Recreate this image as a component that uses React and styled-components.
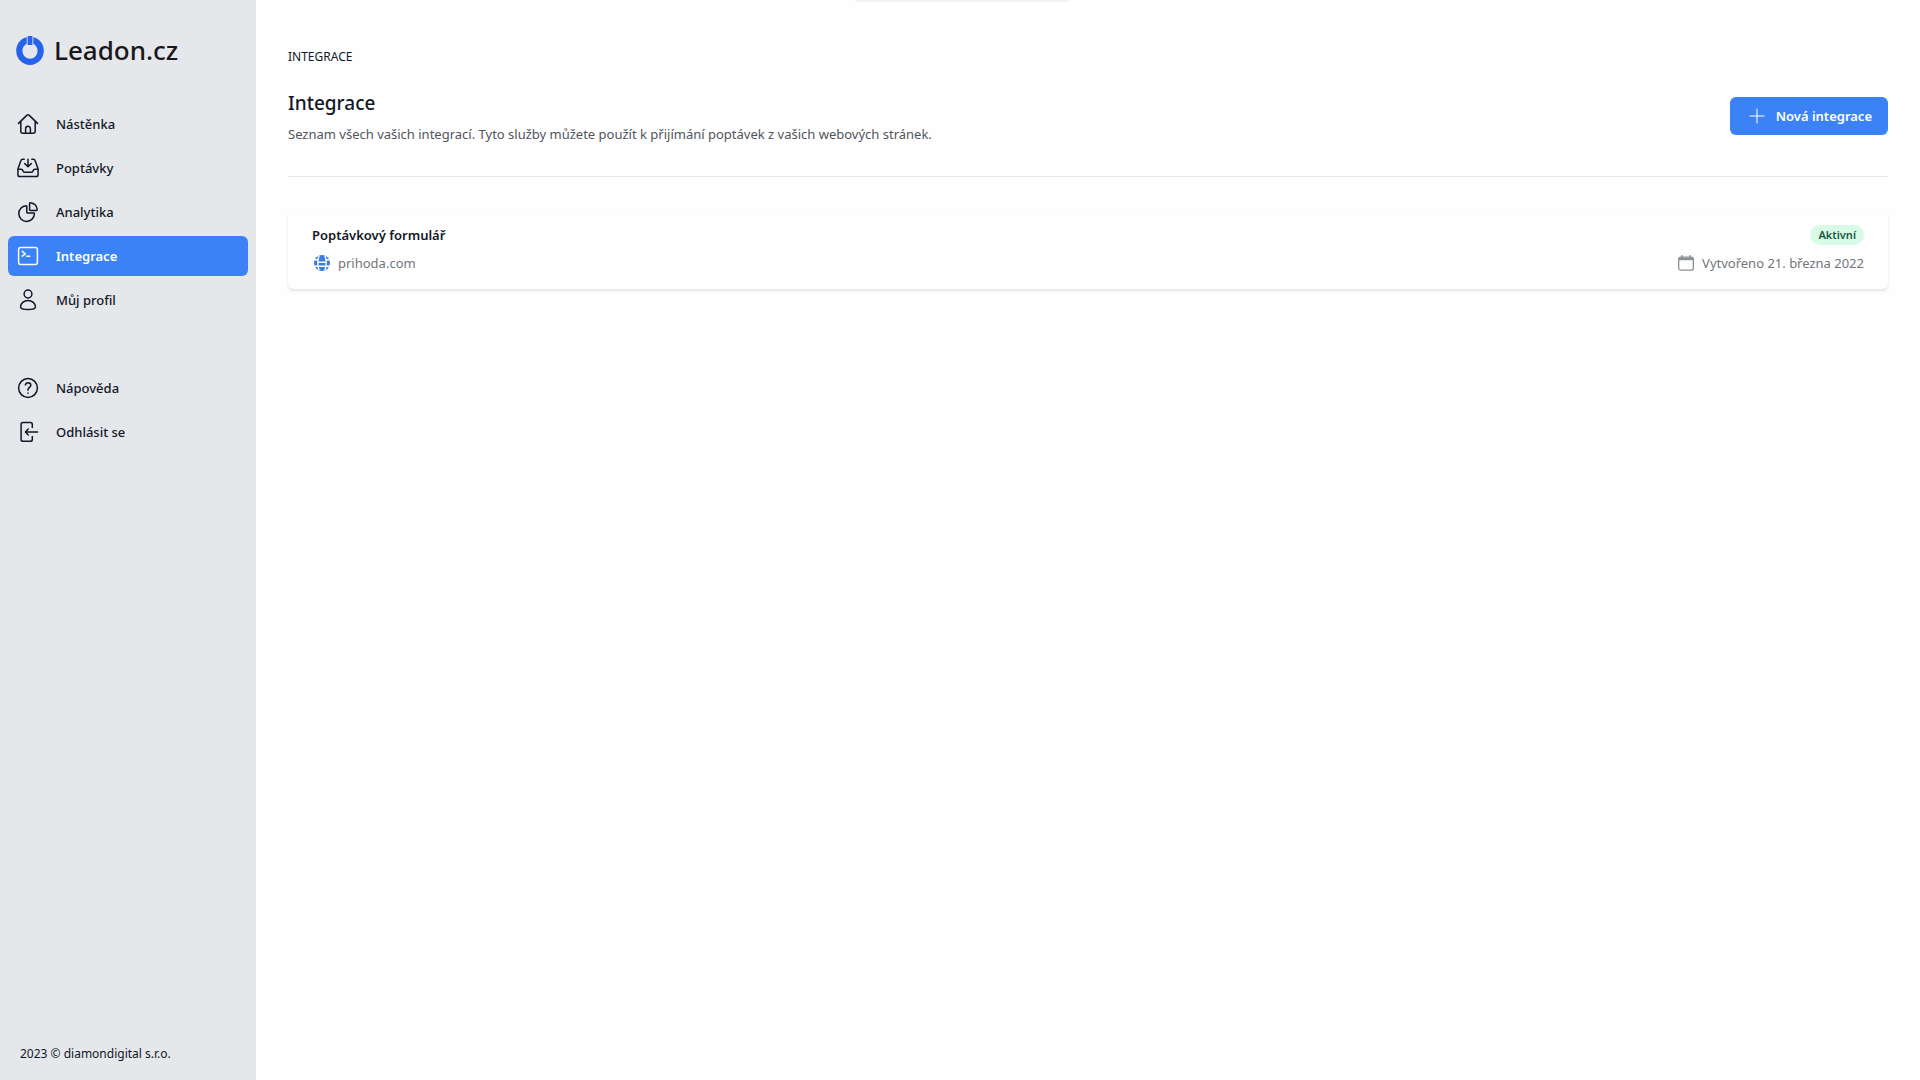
import React from 'react';
import styled, { createGlobalStyle } from 'styled-components';

const GlobalStyle = createGlobalStyle`
  *, *::before, *::after { box-sizing: border-box; }
  body {
    margin: 0;
    background: #fefefe;
    color: #111827;
    font-family: "Segoe UI", "Noto Sans", "Open Sans", sans-serif;
    font-size: 13px;
    line-height: 20px;
  }
  h1, h2, p { margin: 0; }
  a { color: inherit; text-decoration: none; }
  svg { display: block; flex: none; }
`;

const Layout = styled.div`
  display: flex;
  min-height: 100vh;
`;

const Sidebar = styled.aside`
  display: flex;
  flex-direction: column;
  flex: none;
  width: 256px;
  background: #e5e7eb;
`;

const Brand = styled.a`
  display: flex;
  align-items: center;
  gap: 10px;
  padding: 32px 16px;
  font-size: 26px;
  line-height: 36px;
  font-weight: 500;
  color: #18181b;
`;

const Nav = styled.nav`
  display: flex;
  flex-direction: column;
  gap: 48px;
  padding: 4px 8px;
`;

const NavGroup = styled.div`
  display: flex;
  flex-direction: column;
  gap: 4px;
`;

const NavLink = styled.a`
  display: flex;
  align-items: center;
  gap: 18px;
  height: 40px;
  padding: 0 10px;
  border-radius: 6px;
  font-weight: ${(p) => (p.$active ? 600 : 500)};
  color: ${(p) => (p.$active ? '#fff' : '#111827')};
  background: ${(p) => (p.$active ? '#3b82f6' : 'transparent')};
`;

const Copyright = styled.p`
  margin-top: auto;
  padding: 16px 20px;
  font-size: 12px;
`;

const Main = styled.main`
  flex: 1;
  min-width: 0;
  padding: 48px 32px;
`;

const Breadcrumb = styled.p`
  margin-bottom: 22px;
  font-size: 12px;
  line-height: 18px;
  text-transform: uppercase;
`;

const PageHeader = styled.header`
  display: flex;
  align-items: center;
  justify-content: space-between;
  gap: 24px;
  padding-bottom: 32px;
  border-bottom: 1px solid #e5e7eb;
`;

const Title = styled.h1`
  margin-bottom: 6px;
  font-size: 19px;
  line-height: 30px;
  font-weight: 500;
`;

const Description = styled.p`
  color: #50555d;
`;

const PrimaryButton = styled.button`
  display: flex;
  align-items: center;
  gap: 12px;
  height: 38px;
  padding: 0 16px 0 20px;
  border: 0;
  border-radius: 6px;
  background: #3b82f6;
  color: #fff;
  font: inherit;
  font-weight: 600;
  white-space: nowrap;
`;

const Card = styled.a`
  display: flex;
  flex-direction: column;
  gap: 8px;
  margin-top: 32px;
  padding: 16px 24px;
  border-radius: 6px;
  background: #fefefe;
  box-shadow: 0 2px 3px rgba(0, 0, 0, 0.1);
`;

const CardRow = styled.div`
  display: flex;
  align-items: center;
  justify-content: space-between;
`;

const CardTitle = styled.h2`
  font-size: 13px;
  line-height: 20px;
  font-weight: 600;
`;

const Badge = styled.span`
  padding: 0 8px;
  border-radius: 10px;
  background: #d7fbe6;
  color: #1c5a43;
  font-size: 11px;
  font-weight: 600;
`;

const Meta = styled.span`
  display: flex;
  align-items: center;
  gap: 8px;
  color: #72767d;
`;

const Toast = styled.div`
  position: fixed;
  top: -40px;
  left: 50%;
  width: 216px;
  height: 40px;
  margin-left: -106px;
  border-radius: 4px;
  box-shadow: 0 1px 3px rgba(0, 0, 0, 0.08);
`;

const Icon = ({ size = 20, children }) => (
  <svg
    width={size}
    height={size}
    viewBox="0 0 20 20"
    fill="none"
    stroke="currentColor"
    strokeWidth="1.5"
    strokeLinecap="round"
    strokeLinejoin="round"
    overflow="visible"
    aria-hidden="true"
  >
    {children}
  </svg>
);

const icons = {
  home: (
    <path d="M.5 9.4 9 1.1a1.4 1.4 0 0 1 2 0l8.5 8.3M2.8 7.4v10.4c0 .8.6 1.4 1.4 1.4h11.6c.8 0 1.4-.6 1.4-1.4V7.4M7.6 19v-4.3a2.4 2.4 0 0 1 4.8 0V19" />
  ),
  inbox: (
    <path d="M10 1.2v7.4M6.8 5.6 10 8.7l3.2-3.1M6.2 1.2H4.7c-.9 0-1.6.5-1.8 1.3L-.1 11v5.7c0 1 .8 1.8 1.8 1.8h16.6c1 0 1.8-.8 1.8-1.8V11l-3-8.5c-.2-.8-.9-1.3-1.8-1.3h-1.5M-.1 11.3h3.3c.8 0 1.4.5 1.6 1.2.3 1.2 1 1.8 2 1.8h6.4c1 0 1.7-.6 2-1.8.2-.7.8-1.2 1.6-1.2h3.3" />
  ),
  chart: (
    <>
      <path d="M8.2 3.8a7.8 7.8 0 1 0 8.2 7.9c0-.5-.3-.7-.7-.7H9.6a.8.8 0 0 1-.8-.8V4.5c0-.4-.2-.7-.6-.7z" />
      <path d="M11.6 1.5v6.1c0 .5.3.8.8.8h6c.6 0 .9-.4.8-1A7.7 7.7 0 0 0 12.5.7c-.5-.1-.9.2-.9.8z" />
    </>
  ),
  terminal: (
    <>
      <rect x=".6" y="1.4" width="18.8" height="17" rx="2" />
      <path d="m4.3 5.4 3 2.4-3 2.4M8.8 10.2h3" />
    </>
  ),
  user: (
    <>
      <circle cx="10" cy="4" r="3.9" />
      <path d="M10 10.4c4.2 0 7.4 3.1 7.5 6.4 0 1.6-2.6 2.8-7.5 2.8s-7.5-1.2-7.5-2.8c.1-3.3 3.3-6.4 7.5-6.4z" />
    </>
  ),
  help: (
    <>
      <circle cx="10" cy="10" r="9.4" />
      <path d="M7.4 6.9c.3-1.3 1.3-2.1 2.7-2.1 1.6 0 2.7 1 2.7 2.4 0 2.3-2.8 2.2-2.8 4.6v.4M10 15v.2" />
    </>
  ),
  logout: (
    <path d="M14.3 5.4V2.5c0-1.1-.8-1.9-1.9-1.9H5C3.9.6 3.1 1.4 3.1 2.5v14.9c0 1.1.8 1.9 1.9 1.9h7.4c1.1 0 1.9-.8 1.9-1.9v-2.9M19.5 10H7.3M10.3 7l-3 3 3 3" />
  ),
  plus: <path d="M10 0v20M0 10h20" />,
};

const Logo = () => (
  <svg width="28" height="30" viewBox="0 0 28 30" fill="none" aria-hidden="true">
    <ellipse cx="14" cy="15.8" rx="10.7" ry="11" stroke="#2563eb" strokeWidth="6.2" />
    <path d="M10.7 0h6.6v10.8h-6.6z" fill="#e5e7eb" />
    <path d="M11.6 1h4.8v9h-4.8z" fill="#2563eb" />
  </svg>
);

const Globe = () => (
  <svg width="18" height="16" viewBox="0 0 18 16" fill="none" aria-hidden="true">
    <circle cx="10" cy="8" r="8" fill="#3b7ddd" />
    <path
      d="M1 4.7h5.6M13.4 4.7H19M1 11.3h18M5.6 7.2h8.8M7.2.5C5.4 4 5.4 12 7.2 15.5M12.8.5c1.8 3.5 1.8 11.5 0 15"
      stroke="#fefefe"
      strokeWidth="1.4"
    />
  </svg>
);

const Calendar = () => (
  <svg width="16" height="16" viewBox="0 0 16 16" fill="none" stroke="#8b8f94" aria-hidden="true">
    <rect x=".7" y="2.2" width="14.6" height="13" rx="2" strokeWidth="1.3" />
    <path d="M.7 4h14.6" strokeWidth="2.4" />
    <path d="M4 0v3M12 0v3" strokeWidth="1.3" />
  </svg>
);

const navGroups = [
  [
    { label: 'Nástěnka', icon: 'home' },
    { label: 'Poptávky', icon: 'inbox' },
    { label: 'Analytika', icon: 'chart' },
    { label: 'Integrace', icon: 'terminal', active: true },
    { label: 'Můj profil', icon: 'user' },
  ],
  [
    { label: 'Nápověda', icon: 'help' },
    { label: 'Odhlásit se', icon: 'logout' },
  ],
];

export default function App() {
  return (
    <>
      <GlobalStyle />
      <Layout>
        <Sidebar>
          <Brand href="#">
            <Logo />
            Leadon.cz
          </Brand>
          <Nav>
            {navGroups.map((group, i) => (
              <NavGroup key={i}>
                {group.map((item) => (
                  <NavLink key={item.label} href="#" $active={item.active}>
                    <Icon>{icons[item.icon]}</Icon>
                    {item.label}
                  </NavLink>
                ))}
              </NavGroup>
            ))}
          </Nav>
          <Copyright>2023 © diamondigital s.r.o.</Copyright>
        </Sidebar>
        <Main>
          <Breadcrumb>Integrace</Breadcrumb>
          <PageHeader>
            <div>
              <Title>Integrace</Title>
              <Description>
                Seznam všech vašich integrací. Tyto služby můžete použít k přijímání poptávek z vašich webových stránek.
              </Description>
            </div>
            <PrimaryButton type="button">
              <Icon size={14}>{icons.plus}</Icon>
              Nová integrace
            </PrimaryButton>
          </PageHeader>
          <Card href="#">
            <CardRow>
              <CardTitle>Poptávkový formulář</CardTitle>
              <Badge>Aktivní</Badge>
            </CardRow>
            <CardRow>
              <Meta>
                <Globe />
                prihoda.com
              </Meta>
              <Meta>
                <Calendar />
                Vytvořeno 21. března 2022
              </Meta>
            </CardRow>
          </Card>
        </Main>
      </Layout>
      <Toast />
    </>
  );
}
